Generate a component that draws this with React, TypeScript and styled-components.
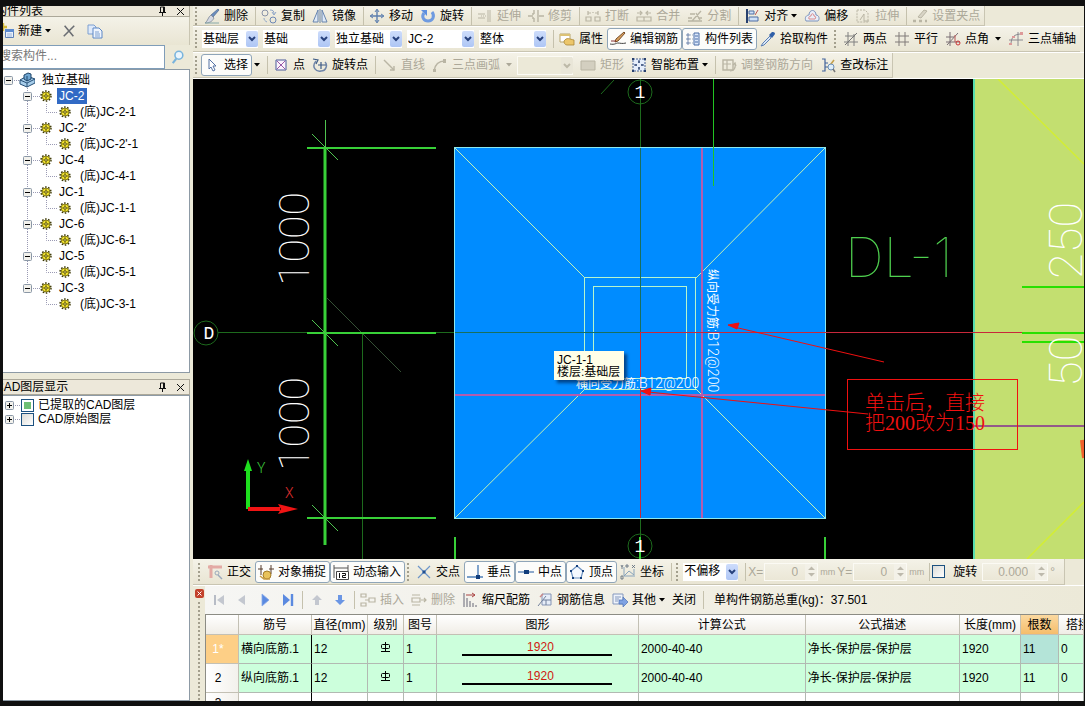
import React from 'react';
import styled, { createGlobalStyle, css } from 'styled-components';

const UI_FONT = '"Liberation Sans", "Noto Sans CJK SC", sans-serif';
const DRAFT_FONT = 'Roboto, "Noto Sans CJK SC", sans-serif';

const color = {
  face: '#ece9d8',
  faceLight: '#f4f2e8',
  line: '#c9c5b2',
  text: '#000000',
  off: '#aca899',
  select: '#316ac5',
  checkedBorder: '#8fa5b8',
  mint: '#ccffdc',
};

const GlobalStyle = createGlobalStyle`
  *, *::before, *::after { box-sizing: border-box; }
  body {
    margin: 0;
    background: #101010;
    font-family: ${UI_FONT};
    font-size: 12px;
    line-height: 16px;
    color: ${color.text};
  }
  button, input, select { font: inherit; color: inherit; margin: 0; }
`;

/* ---------- frame ---------- */

const Frame = styled.div`
  display: flex;
  height: 100vh;
  padding: 6px 1px 5px 3px;
  background: #101010;
  overflow: hidden;
`;

const Sidebar = styled.aside`
  display: grid;
  grid-template-rows: 367fr 322fr;
  row-gap: 6px;
  flex: none;
  width: 190px;
  padding-right: 3px;
  background: ${color.face};
`;

const Main = styled.main`
  display: flex;
  flex-direction: column;
  flex: 1;
  min-width: 0;
  background: ${color.face};
`;

/* ---------- side panels ---------- */

const Panel = styled.section`
  display: flex;
  flex-direction: column;
  min-height: 0;
  overflow: hidden;
`;

const PanelTitle = styled.header<{ $clipped?: boolean }>`
  display: flex;
  align-items: center;
  flex: none;
  height: ${p => (p.$clipped ? 11 : 16)}px;
  overflow: hidden;
  border: 1px solid #aca899;
  border-width: ${p => (p.$clipped ? '0 1px 1px 0' : '1px 1px 1px 0')};
  background: #ede8da;
`;

const PanelName = styled.h2`
  flex: 1;
  margin: 0 0 0 -8px;
  font-size: 12px;
  font-weight: 400;
  line-height: 14px;
  white-space: nowrap;
`;

const TitleButton = styled.button`
  display: flex;
  align-items: center;
  justify-content: center;
  width: 18px;
  height: 14px;
  padding: 0;
  border: 0;
  background: none;
`;

const PanelTools = styled.div`
  display: flex;
  align-items: center;
  gap: 4px;
  flex: none;
  height: 28px;
  margin-left: -8px;
  border-right: 1px solid ${color.line};
  background: linear-gradient(${color.faceLight}, #e9e5d3);
`;

const SearchRow = styled.form`
  display: flex;
  flex: none;
  height: 24px;
`;

const SearchInput = styled.input`
  flex: 1;
  min-width: 0;
  padding: 0 0 3px;
  text-indent: -4px;
  border: 1px solid #7f9db9;
  border-left: 0;
  background: #fff;
  &::placeholder { color: #777; opacity: 1; }
`;

const SearchButton = styled.button`
  display: flex;
  align-items: center;
  justify-content: center;
  width: 25px;
  padding: 0;
  border: 0;
  background: ${color.face};
`;

const TreeBox = styled.div`
  flex: 1;
  min-height: 0;
  padding-top: 2px;
  border: 1px solid #8d9aa5;
  border-left: 0;
  background: #fff;
  overflow: hidden;
`;

const TreeList = styled.ul`
  margin: 0;
  padding: 0;
  list-style: none;
`;

const TreeRow = styled.div<{ $indent: number }>`
  display: flex;
  align-items: center;
  height: 16px;
  padding-left: ${p => p.$indent}px;
  white-space: nowrap;
`;

const Expander = styled.button`
  display: flex;
  padding: 0;
  border: 0;
  background: none;
`;

const NodeLabel = styled.span<{ $selected?: boolean; $leaf?: boolean }>`
  height: 16px;
  margin-left: ${p => (p.$leaf ? 7 : 5)}px;
  padding: 0 2px;
  ${p => p.$selected && css`
    padding-right: 3px;
    background: ${color.select};
    color: #fff;
  `}
`;

const LayerRow = styled.li`
  display: flex;
  align-items: center;
  height: 14px;
  padding-left: 2px;
`;

const LayerLabel = styled.label`
  display: flex;
  align-items: center;
  gap: 4px;
  line-height: 14px;
  white-space: nowrap;
`;

const CheckBox = styled.input.attrs({ type: 'checkbox' })`
  appearance: none;
  flex: none;
  width: 13px;
  height: 13px;
  border: 1px solid #1c5180;
  background: linear-gradient(135deg, #dcdcd7, #fff);
  &:checked {
    background: #6fbf74;
    box-shadow: inset 0 0 0 2px #fff;
  }
`;

/* ---------- tool bars ---------- */

const Bar = styled.div<{ $h: number }>`
  display: flex;
  flex: none;
  height: ${p => p.$h}px;
  overflow: hidden;
  border-bottom: 1px solid #fff;
`;

const Strip = styled.div<{ $open?: boolean; $inset?: number }>`
  display: flex;
  align-items: center;
  flex: none;
  padding-left: ${p => p.$inset ?? 0}px;
  border-bottom: 1px solid ${color.line};
  border-right: ${p => (p.$open ? '0' : `1px solid ${color.line}`)};
  background: linear-gradient(${color.faceLight}, #e9e5d3);
`;

const Grip = styled.span`
  flex: none;
  width: 8px;
  height: 18px;
  background: radial-gradient(circle at 1px 1px, #a39f8d 1px, transparent 1px) 2px 0 / 8px 4px;
`;

const Separator = styled.span`
  flex: none;
  width: 6px;
  height: 18px;
  background: linear-gradient(#c5c1ad, #c5c1ad) 3px 0 / 1px 100% no-repeat;
`;

const Tool = styled.button<{ $on?: boolean }>`
  display: flex;
  align-items: center;
  gap: 4px;
  flex: none;
  height: 22px;
  padding: 0 3px 0 2px;
  border: 1px solid transparent;
  border-radius: 3px;
  background: none;
  white-space: nowrap;
  &:disabled { color: ${color.off}; }
  ${p => p.$on && css`
    border-color: ${color.checkedBorder};
    background: #fcfcfa;
  `}
`;

const IconTool = styled(Tool)`
  justify-content: center;
  width: 23px;
  padding: 0;
`;

const CaretBox = styled.span<{ $wide?: boolean }>`
  display: flex;
  margin-left: ${p => (p.$wide ? 2 : -1)}px;
`;

const SplitCaret = styled.button`
  display: flex;
  align-items: center;
  width: 12px;
  height: 22px;
  padding: 0 2px;
  border: 0;
  background: none;
`;

const ComboBox = styled.span<{ $w: number }>`
  display: grid;
  grid-template-columns: 1fr 12px;
  flex: none;
  width: ${p => p.$w}px;
  height: 18px;
  margin: 0 4px 0 1px;
`;

const ComboSelect = styled.select`
  appearance: none;
  grid-area: 1 / 1 / 2 / 3;
  padding: 0 12px 1px 1px;
  border: 0;
  border-radius: 0;
  background: #fff;
  &:disabled {
    border: 1px solid #fbfaf4;
    background: ${color.face};
    opacity: 1;
  }
`;

const ComboArrow = styled.span<{ $off?: boolean }>`
  display: flex;
  align-items: center;
  justify-content: center;
  grid-area: 1 / 2 / 2 / 3;
  margin: 1px 0;
  border-radius: 2px;
  background: ${p => (p.$off ? '#e9e6d8' : 'linear-gradient(#cddcfb, #aec6f5)')};
  pointer-events: none;
`;

const FieldLabel = styled.label`
  flex: none;
  padding-right: 1px;
  color: ${color.off};
`;

const NumberBox = styled.span<{ $w: number }>`
  display: flex;
  flex: none;
  width: ${p => p.$w}px;
  height: 18px;
  border: 1px solid #fbfaf4;
`;

const NumberInput = styled.input`
  flex: 1;
  min-width: 0;
  padding: 0 7px 0 0;
  border: 0;
  background: none;
  text-align: right;
  color: ${color.off};
`;

const Spinner = styled.span`
  display: flex;
  align-items: center;
  justify-content: center;
  width: 12px;
  background: #f3f1e8;
`;

const Unit = styled.span`
  flex: none;
  padding: 0 2px;
  font-size: 9px;
  color: ${color.off};
`;

const Degree = styled(Unit)`
  width: 16px;
  font-size: 12px;
`;

const TurnLabel = styled.label`
  display: flex;
  align-items: center;
  gap: 8px;
  flex: none;
  padding-right: 5px;
`;

/* ---------- drawing area ---------- */

const Canvas = styled.div`
  position: relative;
  flex: 1;
  min-height: 0;
  overflow: hidden;
  background: #000;
`;

const Drawing = styled.svg`
  display: block;
  width: 100%;
  height: 100%;
`;

const Tooltip = styled.div`
  position: absolute;
  left: 361px;
  top: 272px;
  padding: 3px 4px 2px 3px;
  background: #ffffe8;
  box-shadow: 3px 3px 3px rgba(0, 20, 60, 0.6);
  line-height: 12px;
  white-space: nowrap;
`;

/* ---------- rebar editor ---------- */

const Editor = styled.section`
  display: flex;
  flex: none;
  height: 115px;
`;

const EditorEdge = styled.div`
  display: flex;
  flex-direction: column;
  align-items: center;
  gap: 4px;
  flex: none;
  width: 12px;
  padding-top: 3px;
`;

const CloseDot = styled.button`
  display: flex;
  padding: 0;
  border: 0;
  background: none;
`;

const EdgeGrip = styled.span`
  flex: 1;
  width: 3px;
  background: radial-gradient(circle at 1px 1px, #a39f8d 1px, transparent 1px) 0 0 / 3px 4px;
`;

const EditorBody = styled.div`
  display: flex;
  flex-direction: column;
  flex: 1;
  min-width: 0;
`;

const EditorBar = styled.div`
  display: flex;
  align-items: center;
  flex: none;
  height: 28px;
  padding-left: 2px;
  background: linear-gradient(90deg, #f6f6f4, #f1efe5 50%, #ece9d8);
`;

const Total = styled.span`
  padding-left: 8px;
  white-space: nowrap;
`;

const Sheet = styled.div`
  flex: 1;
  min-height: 0;
  overflow: hidden;
  border: 1px solid #8c8c84;
  border-width: 1px 0 0 1px;
  background: #fff;
`;

const Grid = styled.table`
  width: 100%;
  table-layout: fixed;
  border-collapse: separate;
  border-spacing: 0;
`;

const HeadCell = styled.th<{ $active?: boolean; $cut?: boolean }>`
  height: 20px;
  padding: ${p => (p.$cut ? '0 0 0 7px' : '0')};
  border: 1px solid #c3c0b4;
  border-width: 0 1px 1px 0;
  background: ${p => (p.$active ? 'linear-gradient(#fbd9a0, #f5bd6b)' : 'linear-gradient(#fff, #f0ede6)')};
  font-weight: 400;
  text-align: ${p => (p.$cut ? 'left' : 'center')};
  white-space: nowrap;
  overflow: hidden;
`;

const RowHead = styled.th<{ $active?: boolean; $short?: boolean }>`
  height: ${p => (p.$short ? 20 : 29)}px;
  padding: 0 8px 0 0;
  border: 1px solid #c3c0b4;
  border-width: 0 1px 1px 0;
  background: ${p => (p.$active ? '#fdcf86' : 'linear-gradient(90deg, #fff, #f3f1ec)')};
  color: ${p => (p.$active ? '#fff' : '#000')};
  font-weight: 400;
`;

const Cell = styled.td<{ $blank?: boolean; $mid?: boolean; $focus?: boolean; $bar?: boolean }>`
  height: ${p => (p.$blank ? 20 : 29)}px;
  padding: ${p => (p.$mid ? '0' : '0 0 0 2px')};
  border: 1px solid #b2b9b2;
  border-width: 0 1px 1px 0;
  border-right-color: ${p => (p.$bar ? '#000' : '#b2b9b2')};
  background: ${p => (p.$blank ? '#fff' : p.$focus ? '#b4e4d8' : color.mint)};
  text-align: ${p => (p.$mid ? 'center' : 'left')};
  white-space: nowrap;
  overflow: hidden;
`;

const ShapeLine = styled.span`
  display: inline-block;
  width: 150px;
  margin-bottom: 4px;
  border-bottom: 2px solid #000;
  padding-left: 6px;
  color: #d02010;
  line-height: 14px;
`;

/* ---------- icons ---------- */

const G = '#b9b5a4';

const glyphs: Record<string, React.ReactNode> = {
  brush: <><path d="M14 1l1 1-6 7-2-2z" fill="#6c8fc0" stroke="#49658c" strokeWidth=".7" /><path d="M7 7l3 3c-2 4-5 5-9 5 3-2 3-6 6-8z" fill="#d5d9e2" stroke="#7c8798" strokeWidth=".8" /><path d="M1 15h14" stroke="#8aa" /></>,
  copy: <><circle cx="4" cy="5" r="3" stroke="#8a93a8" /><circle cx="12" cy="12" r="3" stroke="#6d88b5" /><path d="M9 2c3 0 4 1 4 4m-2-2l2 3 2-3M3 10c0 2 1 3 3 4" stroke="#8fa6c8" /></>,
  mirror: <><path d="M6 2v12H1zM10 2v12h5z" fill="#dfeaf8" stroke="#6784ad" /><path d="M8 1v14" stroke="#6784ad" /></>,
  move: <><path d="M8 2v12M2 8h12" stroke="#5d7fae" strokeWidth="1.4" /><path d="M6 4l2-3 2 3M6 12l2 3 2-3M4 6L1 8l3 2M12 6l3 2-3 2" stroke="#5d7fae" /></>,
  rotate: <><path d="M4 5c-3 4 0 8 4 8 5 0 7-5 4-9" stroke="#6f9be0" strokeWidth="3" /><path d="M1 2h6v6z" fill="#5c8fdf" /></>,
  extend: <><path d="M1 6h7M1 10h7M11 2v12M13 2v12" stroke={G} /><path d="M4 8h5" stroke={G} strokeDasharray="1 1" /></>,
  trim: <><path d="M0 8h5M11 8h5M6 2v4M6 10v4M10 2v12M4 6h2M4 10h2" stroke={G} strokeWidth="1.4" /></>,
  breakIt: <><path d="M1 9h5v4H1zM10 9h5v4h-5zM3 3v4M3 5h3M13 3v4M13 5h-3M8 4v1" stroke={G} strokeWidth="1.2" /></>,
  merge: <><path d="M1 9h14v4H1zM4 3l2 2-2 2M12 3l-2 2 2 2M1 5h4M15 5h-4M8 9v4" stroke={G} strokeWidth="1.2" /></>,
  split: <><path d="M1 10h4M11 10h4M1 13h14M3 6h5M5 13L14 3M9 5l4 7" stroke={G} strokeWidth="1.3" /></>,
  align: <><path d="M3 1v14" stroke="#27406e" strokeWidth="2" /><path d="M5 3h5v3H5zM5 9h9v4H5z" fill="#cfe0f7" stroke="#4c6da3" /><path d="M14 2l-3 5" stroke="#b55" /></>,
  offset: <><path d="M2 13c-2-4 1-6 3-6 0-6 7-6 7 0 3 0 4 4 2 6z" fill="#e9eef8" stroke="#7c94bd" /><path d="M5 11c-1-2 1-3 2-3 0-3 3-3 3 0 2 0 2 2 1 3z" stroke="#d98a8a" /></>,
  stretch: <><path d="M2 2h8l3 3v9H2z" stroke={G} strokeDasharray="2 1" /><path d="M5 12l4-6v7h5" stroke={G} /></>,
  grips: <><path d="M1 13h3M7 13h3M13 13h2" stroke={G} strokeWidth="2.4" /><path d="M6 9l6-7 3 1-6 7z" fill="#d8d4c6" stroke={G} /></>,
  props: <><path d="M1 3h10v8H1z" fill="#fff" stroke="#b7a56c" /><path d="M1 3h10v2H1z" fill="#dcc274" /><path d="M5 10c3-4 5-2 10-1v5H8c-2 0-3-2-3-4z" fill="#ecc66a" stroke="#a98636" strokeWidth=".8" /></>,
  pen: <><path d="M15 2L8 10l-3 1 1-3 8-7z" fill="#d9a15e" stroke="#6a3f1c" strokeWidth=".9" /><path d="M0 13c5 1 6-1 8-1s4 1 8 0" stroke="#444" /><path d="M1 10h5" stroke="#833" /></>,
  list: <><path d="M9 2h5v12H9z" fill="#dce8fa" stroke="#486da6" /><path d="M10 5h3M10 8h3M10 11h3" stroke="#486da6" /><path d="M2 3h2v2H2zM2 7h2v2H2zM2 11h2v2H2z" stroke="#5470a0" strokeWidth=".8" /><path d="M5 4h3M5 8h3M5 12h3" stroke="#9ab" strokeDasharray="1 1" /></>,
  dropper: <><path d="M10 5L3 12l-2 3 3-1 7-7z" fill="#dbe7f7" stroke="#5a7fb4" /><path d="M9 4l3 3 3-4c0-2-2-2-3-2z" fill="#2f5fa8" /></>,
  axis2: <><path d="M1 11h14M5 1v14M11 3v12M2 5h10" stroke="#808080" /><path d="M2 14L14 2" stroke="#777" /></>,
  axisPar: <><path d="M1 5h14M1 11h14M5 1v14M11 1v14" stroke="#807a78" /></>,
  axisAng: <><path d="M1 11h14M5 1v14M2 14L13 2M1 6h8" stroke="#7b6f74" /><circle cx="13" cy="12" r="2" stroke="#c33" /><path d="M10 4v7" stroke="#b55" /></>,
  axis3: <><path d="M3 14C3 6 6 3 14 3M10 1v14M1 9h14" stroke="#8a8a90" /><path d="M1 12h3v2H1zM4 5h3v2H4zM12 1h3v3h-3z" fill="#d99" /></>,
  pointer: <path d="M5 2v10l2-2 2 4 2-1-2-4h3z" fill="#fff" stroke="#5472a4" />,
  point: <><path d="M3 3h10v10H3z" fill="#fbf3fb" stroke="#4b5a9a" /><path d="M4 4l8 8M12 4l-8 8" stroke="#9a5aa8" /></>,
  turnPt: <><path d="M4 4c-5 6 0 11 5 10 5 0 7-6 4-9" stroke="#6f85a8" strokeWidth="1.5" /><path d="M1 2l5 1-2 4M9 5v7M6 8h8" stroke="#3d5b86" strokeWidth="1.2" /></>,
  line: <><path d="M3 3l10 10" stroke={G} strokeWidth="1.4" /><path d="M13 9v4H9" stroke={G} strokeWidth="1.4" /></>,
  arc: <><path d="M2 14C3 7 7 4 13 4" stroke={G} strokeWidth="1.5" /><path d="M11 2h3v4h-3zM1 12h3v3H1z" fill={G} /></>,
  rect: <path d="M1 4h14v9H1z" fill="#d3cfc0" stroke={G} />,
  smart: <><path d="M2 2h12v12H2z" fill="#e6eefb" stroke="#445e90" strokeDasharray="2 1" /><path d="M8 3v3M8 10v3M3 8h3M10 8h3M7 5h2M7 11h2M5 7v2M11 7v2" stroke="#223a6a" /><path d="M1 1h2v2H1zM13 1h2v2h-2zM1 13h2v2H1zM13 13h2v2h-2z" fill="#28406e" /></>,
  turnBar: <><path d="M2 3h10v10H2z" stroke={G} strokeWidth="1.4" /><path d="M6 3v10M2 7h8M9 14c4 0 6-3 5-8l-2 2m2-2l1 3" stroke={G} strokeWidth="1.2" /></>,
  note: <><path d="M2 2h3v4h3M2 14h3v-4h3M5 2v12" stroke="#41639b" strokeWidth="1.2" /><path d="M8 11l6-8" stroke="#c4a04a" strokeWidth="1.6" /><circle cx="11" cy="10" r="3" fill="#dfeefa" stroke="#6b8fb8" /><path d="M13 12l2 3" stroke="#777" strokeWidth="1.5" /></>,
  ortho: <><path d="M1 3h14M4 1v13" stroke="#e3aaa4" strokeWidth="3" /><circle cx="10" cy="9" r="2" stroke="#9aa8ba" /><path d="M11 11l4 4" stroke="#9aa8ba" strokeWidth="1.5" /></>,
  snap: <><path d="M3 1v10M13 1v9M0 5h5M11 5h5" stroke="#553a2a" /><circle cx="9" cy="11" r="4" fill="#e8c25a" stroke="#a37b28" /><path d="M2 12l4 3h6" stroke="#c99c40" strokeWidth="1.5" /></>,
  dyn: <><path d="M1 1v13M15 1v6M1 4h14" stroke="#555" /><path d="M3.500 7.500h12v8h-12z" fill="#fff" stroke="#444" /><path d="M6.500 9v5M9 9.500h3.500v2H9.500v2H13" stroke="#111" /></>,
  cross: <><path d="M2 2l12 12M14 2L2 14" stroke="#6c95c9" strokeWidth="1.2" /><path d="M6.500 6.500h3v3h-3z" fill="#1f4f93" /></>,
  perp: <><path d="M11 1v12M0 13h16" stroke="#4d7fb8" strokeWidth="1.4" /><path d="M9 11h4v4H9z" fill="#123e7c" /></>,
  mid: <><path d="M0 8h16" stroke="#5d86b8" strokeWidth="1.4" /><path d="M6 6h5v4H6z" fill="#123e7c" /></>,
  vertex: <><path d="M8 2l6 5-2 7H4L2 7z" fill="#f4f9ff" stroke="#6d93c2" strokeWidth="1.2" /><path d="M7 1h2v2H7zM13 6h2v2h-2zM11 13h2v2h-2zM3 13h2v2H3zM1 6h2v2H1z" fill="#123e7c" /></>,
  coord: <><path d="M4 3v9h11M4 12l5-5 5 4V5" stroke="#87a3bb" /><path d="M1 1l1 2 1-2M2 3v2M12 1l3 3M15 1l-3 3M1 12h2v3H1zM6 1h2v2H6z" stroke="#567" strokeWidth=".8" /></>,
  first: <><path d="M4 3v10" stroke="#b7bcc6" strokeWidth="2" /><path d="M13 3v10L6 8z" fill="#c3c7cf" /></>,
  prev: <path d="M11 3v10L4 8z" fill="#c3c7cf" />,
  next: <path d="M5 2v12l7-6z" fill="#5b8ae0" stroke="#87a9ea" strokeWidth=".8" />,
  last: <><path d="M3 2v12l7-6z" fill="#5b8ae0" /><path d="M12 2v12" stroke="#5b8ae0" strokeWidth="2.4" /></>,
  up: <path d="M8 3l5 5h-3v5H6V8H3z" fill="#c3c7cf" />,
  down: <path d="M8 13L3 8h3V3h4v5h3z" fill="#6b96e4" />,
  insertRow: <><path d="M1 2h5v3H1zM1 11h5v3H1zM9 6h6v4H9zM5 8h4" stroke={G} strokeWidth="1.2" /></>,
  deleteRow: <><path d="M1 3h8M1 6h8v4H1zM1 13h8M10 8h5M13 6l2 2-2 2" stroke={G} strokeWidth="1.2" /></>,
  scale: <><path d="M2 1v14M5 6v9M8 9v6M11 11v4M14 13v2" stroke="#667" /><path d="M4 3h9M10 1l3 2-3 2" stroke="#a44" /></>,
  info: <><path d="M5 2h9v11H5z" fill="#e6edf8" stroke="#8494b5" /><path d="M1 14l8-10M6 8h8M9 8v5" stroke="#71809c" /><path d="M3 5l3-3" stroke="#c88" strokeWidth="1.5" /></>,
  other: <><path d="M1 2h10v10H1z" fill="#eef3fb" stroke="#8498bd" /><path d="M3 5h6M3 7h4M3 9h3" stroke="#8498bd" /><path d="M7 8h4V5l5 5-5 5v-3H7z" fill="#7fa2e2" stroke="#4c70b5" strokeWidth=".7" /></>,
  fresh: <><path d="M7.500 6.500h8v8h-8z" fill="#e8f0fc" stroke="#5b80b8" /><path d="M7 6h9v3H7z" fill="#5b8ad0" /><path d="M9 11h5M9 13h5" stroke="#9db6da" /><path d="M5 0v8M1 4h8" stroke="#d2b93c" strokeWidth="2.4" /></>,
  remove: <path d="M3 2l10 12M14 2L2 14" stroke="#6b6e73" strokeWidth="1.8" />,
  duplicate: <><path d="M1 2h6l2 2v7H1z" fill="#dfeafa" stroke="#7d9fd0" /><path d="M6 5h6l3 3v7H6z" fill="#eef4fd" stroke="#5d87c5" /><path d="M8 9h4M8 11h5M8 13h5" stroke="#7d9fd0" /></>,
  find: <><circle cx="9" cy="6" r="4.500" fill="#eaf5fd" stroke="#79b4dd" strokeWidth="1.8" /><path d="M6 10l-4 5" stroke="#79b4dd" strokeWidth="2.400" /></>,
  footing: <><path d="M1 8l7-4 8 3v4l-8 4-7-3z" fill="#a7cdea" stroke="#254e75" /><path d="M1 8l7 3 8-4M8 11v4" stroke="#254e75" /><path d="M5 3l4-2 3 1v5L8 9 5 7z" fill="#6fa6d2" stroke="#1e4468" /><path d="M8 4v5" stroke="#1e4468" /></>,
};

const Icon = ({ name, size = 16 }: { name: string; size?: number }) => (
  <svg width={size} height={size} viewBox="0 0 16 16" fill="none" aria-hidden="true">{glyphs[name]}</svg>
);

const Gear = () => (
  <svg width="12" height="12" viewBox="0 0 12 12" fill="none" aria-hidden="true">
    <circle cx="6" cy="6" r="5" stroke="#3a3600" strokeWidth="1.400" strokeDasharray="1.600 1.540" />
    <circle cx="6" cy="6" r="4" fill="#f0e22e" stroke="#5a5200" strokeWidth=".7" />
    <path d="M6 2.500v2M6 7.500v2M2.500 6h2M7.500 6h2" stroke="#5a5200" strokeWidth=".8" />
    <circle cx="6" cy="6" r="1.300" fill="#fff27a" stroke="#3a3600" strokeWidth=".8" />
  </svg>
);

const Caret = ({ off }: { off?: boolean }) => (
  <svg width="6" height="4" viewBox="0 0 6 4" aria-hidden="true"><path d="M0 0h6L3 3.500z" fill={off ? color.off : '#000'} /></svg>
);

const Pin = () => (
  <svg width="9" height="10" viewBox="0 0 9 10" fill="none" aria-hidden="true"><path d="M2.500 1h4v5M2.500 1v5M5.500 1v5M1 6.500h7M4.500 6.500V10" stroke="#111" /></svg>
);

const Cross = () => (
  <svg width="9" height="9" viewBox="0 0 9 9" fill="none" aria-hidden="true"><path d="M1 1l7 7M8 1L1 8" stroke="#111" /></svg>
);

/* plus / minus box with the dotted lines that join it to its neighbours */
const Branch = ({ w, above, below, plus }: { w: number; above?: boolean; below?: boolean; plus?: boolean }) => (
  <svg width={w} height="16" viewBox={`0 0 ${w} 16`} fill="none" aria-hidden="true">
    {above && <path d="M4.500 0v4" stroke="#9a9ab4" strokeDasharray="1 1" />}
    {below && <path d="M4.500 13v3" stroke="#9a9ab4" strokeDasharray="1 1" />}
    {w > 10 && <path d={`M10 8.500h${w - 10}`} stroke="#9a9ab4" strokeDasharray="1 1" />}
    <rect x=".5" y="4.500" width="8" height="8" rx="1" fill="#f2f1ec" stroke="#8a97a6" />
    <path d={plus ? 'M2 8.500h5M4.500 6v5' : 'M2 8.500h5'} stroke="#000" />
  </svg>
);

const LeafLines = ({ more }: { more: boolean }) => (
  <svg width="36" height="16" viewBox="0 0 36 16" fill="none" aria-hidden="true">
    {more && <path d="M4.500 0v16" stroke="#9a9ab4" strokeDasharray="1 1" />}
    <path d="M23.500 0v8.500h11" stroke="#9a9ab4" strokeDasharray="1 1" />
  </svg>
);

/* ---------- composed controls ---------- */

type ToolProps = { icon: string; label: string; off?: boolean; on?: boolean; caret?: 'near' | 'far' };

const ToolItem = ({ icon, label, off, on, caret }: ToolProps) => (
  <Tool type="button" disabled={off} $on={on} aria-pressed={on}>
    <Icon name={icon} />
    {label}
    {caret && <CaretBox $wide={caret === 'far'}><Caret off={off} /></CaretBox>}
  </Tool>
);

const Combo = ({ value, name, w, off }: { value: string; name: string; w: number; off?: boolean }) => (
  <ComboBox $w={w}>
    <ComboSelect aria-label={name} disabled={off} defaultValue={value}><option>{value}</option></ComboSelect>
    <ComboArrow $off={off}>
      <svg width="8" height="6" viewBox="0 0 8 6" fill="none" aria-hidden="true">
        <path d="M1 1l3 3 3-3" stroke={off ? '#bdb9a8' : '#27417c'} strokeWidth="2" />
      </svg>
    </ComboArrow>
  </ComboBox>
);

const Stepper = ({ id, value, w, name }: { id: string; value: string; w: number; name?: string }) => (
  <NumberBox $w={w}>
    <NumberInput id={id} aria-label={name} defaultValue={value} disabled />
    <Spinner>
      <svg width="7" height="11" viewBox="0 0 7 11" aria-hidden="true"><path d="M0 4l3.500-3.500L7 4zM0 7l3.500 3.500L7 7z" fill="#bdb9ac" /></svg>
    </Spinner>
  </NumberBox>
);

/* ---------- data ---------- */

const components = ['JC-2', "JC-2'", 'JC-4', 'JC-1', 'JC-6', 'JC-5', 'JC-3'];

const rebars = [
  { no: '1*', name: '横向底筋.1' },
  { no: '2', name: '纵向底筋.1' },
];

const RebarGrade = () => (
  <svg width="11" height="11" viewBox="0 0 11 11" fill="none" role="img" aria-label="HRB335">
    <path d="M5.500 0v10M1 9.500h9" stroke="#000" />
    <rect x="1.500" y="2.500" width="8" height="4" rx="1" stroke="#000" />
  </svg>
);

/* ---------- plan drawing ---------- */

const Plan = () => (
  <Drawing viewBox="193 79 891 480" preserveAspectRatio="xMinYMin slice" fill="none" fontFamily={DRAFT_FONT}>
    <rect x="974" y="79" width="400" height="480" fill="#c3df70" />
    <path d="M974 79v480" stroke="#58dcae" strokeWidth="2" />
    <path d="M998 79l86 85M1084 502l-57 57" stroke="#d3ee33" strokeWidth="1.500" />

    <g stroke="#1d6a1d">
      <path d="M218 332.500h237M362.500 334v225M601 94l13-14" />
      <circle cx="206" cy="333" r="12" />
      <circle cx="640" cy="92" r="12" />
      <circle cx="640" cy="546" r="12" />
      <path d="M640.500 79v69M640.500 518v41" />
    </g>
    <path d="M327 298l74 74" stroke="#355035" />

    <rect x="454.500" y="147.500" width="371" height="371" fill="#008cff" stroke="#8ce8f0" />
    <path d="M455 148l130 130M825 148L696 278M455 518l130-129M825 518L696 389" stroke="#c4f2b4" />
    <rect x="584.500" y="277.500" width="111" height="112" stroke="#b6f5cc" />
    <rect x="593.500" y="286.500" width="93" height="92" stroke="#b6f5cc" />
    <path d="M455 332.500h185M640.500 148v185" stroke="#1a6f5c" />
    <path d="M702 148v370M455 395h370" stroke="#b45cae" strokeWidth="2" />
    <path d="M640.500 333v185M640 332.500h382" stroke="#c8283a" />
    <path d="M713.500 79v107" stroke="#22c422" />

    <g stroke="#38d038" strokeWidth="2">
      <path d="M325 148v397" strokeWidth="3" />
      <path d="M307 148h129M307 333h129M307 518h129" />
      <path d="M455 537v22M640 537v22M825 537v22" />
      <path d="M1022 287h62M1022 333h62M1022 342h62" stroke="#28e000" />
    </g>
    <path d="M325.500 120v28M312 134l26 26M312 320l26 26M312 505l26 26" stroke="#4fc44f" />
    <path d="M974 426h110" stroke="#93598a" strokeWidth="2" />
    <path d="M1082 440l2 18" stroke="#f0602c" strokeWidth="4" />

    <g fill="#fff" fontSize="43" fontWeight="100">
      <text transform="translate(309 286) rotate(-90)">1000</text>
      <text transform="translate(309 471) rotate(-90)">1000</text>
    </g>
    <g fill="#fff" fontSize="47" fontWeight="100">
      <text transform="translate(1082 279) rotate(-90)">250</text>
      <text transform="translate(1082 387) rotate(-90)">50</text>
    </g>
    <text x="845" y="277" fontSize="54" fontWeight="100" fontFamily="Inter, sans-serif" fill="#4fd04f">DL-1</text>
    <g fill="#fff" fontSize="18" textAnchor="middle" fontFamily='"Liberation Mono", monospace'>
      <text x="209" y="339">D</text>
      <text x="640" y="98">1</text>
      <text x="640" y="552">1</text>
    </g>

    <g fill="#fff" fontSize="12">
      <text x="576" y="388">横向受力筋<tspan fontSize="14" fontWeight="300">:B12@200</tspan></text>
      <text transform="translate(708 269) rotate(90)">纵向受力筋<tspan fontSize="14" fontWeight="300">:B12@200</tspan></text>
    </g>

    <path d="M248 509v-40" stroke="#1ee01e" strokeWidth="4" />
    <path d="M248 459l4 12h-8z" fill="#1ee01e" />
    <path d="M248 509h32" stroke="#f01414" strokeWidth="4" />
    <path d="M298 509l-20-5 3 5-3 5z" fill="#f01414" />
    <text x="257" y="473" fontSize="14" fontWeight="300" fill="#3cc83c">Y</text>
    <text x="285" y="498" fontSize="14" fontWeight="300" fill="#e03030">X</text>

    <g stroke="#f01010">
      <rect x="847.500" y="379.500" width="170" height="70" />
      <path d="M884 362l-150-35M868 414l-220-22" />
      <path d="M728 325l11-2-2 6zM641 391l10-3-1 7z" fill="#f01010" />
    </g>
    <g fill="#f01010" fontSize="20" fontWeight="300" fontFamily='"Liberation Serif", "Noto Sans CJK SC", serif'>
      <text x="865" y="410">单击后，直接</text>
      <text x="865" y="430">把200改为150</text>
    </g>
  </Drawing>
);

/* ---------- page ---------- */

const ComponentPanel = () => (
  <Panel aria-label="构件列表">
    <PanelTitle $clipped>
      <PanelName>构件列表</PanelName>
      <TitleButton type="button" aria-label="固定"><Pin /></TitleButton>
      <TitleButton type="button" aria-label="关闭"><Cross /></TitleButton>
    </PanelTitle>
    <PanelTools>
      <Tool type="button">
        <Icon name="fresh" />新建<CaretBox><Caret /></CaretBox>
      </Tool>
      <Tool type="button" aria-label="删除"><Icon name="remove" size={14} /></Tool>
      <Tool type="button" aria-label="复制"><Icon name="duplicate" /></Tool>
    </PanelTools>
    <SearchRow onSubmit={e => e.preventDefault()}>
      <SearchInput aria-label="搜索构件" placeholder="搜索构件..." />
      <SearchButton type="submit" aria-label="搜索"><Icon name="find" size={14} /></SearchButton>
    </SearchRow>
    <TreeBox>
      <TreeList>
        <li>
          <TreeRow $indent={1}>
            <Expander type="button" aria-label="折叠"><Branch w={15} /></Expander>
            <Icon name="footing" />
            <NodeLabel>独立基础</NodeLabel>
          </TreeRow>
          <TreeList>
            {components.map((name, i) => {
              const more = i < components.length - 1;
              return (
                <li key={name}>
                  <TreeRow $indent={20}>
                    <Expander type="button" aria-label="折叠"><Branch w={17} above below={more} /></Expander>
                    <Gear />
                    <NodeLabel $selected={i === 0}>{name}</NodeLabel>
                  </TreeRow>
                  <TreeRow $indent={20}>
                    <LeafLines more={more} />
                    <Gear />
                    <NodeLabel $leaf>{`(底)${name}-1`}</NodeLabel>
                  </TreeRow>
                </li>
              );
            })}
          </TreeList>
        </li>
      </TreeList>
    </TreeBox>
  </Panel>
);

const LayerPanel = () => (
  <Panel aria-label="CAD图层显示">
    <PanelTitle>
      <PanelName>CAD图层显示</PanelName>
      <TitleButton type="button" aria-label="固定"><Pin /></TitleButton>
      <TitleButton type="button" aria-label="关闭"><Cross /></TitleButton>
    </PanelTitle>
    <TreeBox>
      <TreeList>
        <LayerRow>
          <Expander type="button" aria-label="展开"><Branch w={16} plus /></Expander>
          <LayerLabel><CheckBox defaultChecked />已提取的CAD图层</LayerLabel>
        </LayerRow>
        <LayerRow>
          <Expander type="button" aria-label="展开"><Branch w={16} plus /></Expander>
          <LayerLabel><CheckBox />CAD原始图层</LayerLabel>
        </LayerRow>
      </TreeList>
    </TreeBox>
  </Panel>
);

const SnapBar = () => (
  <Bar $h={27}>
    <Strip $inset={3}>
      <Grip />
      <ToolItem icon="ortho" label="正交" />
      <ToolItem icon="snap" label="对象捕捉" on />
      <ToolItem icon="dyn" label="动态输入" on />
      <Grip />
      <ToolItem icon="cross" label="交点" />
      <ToolItem icon="perp" label="垂点" on />
      <ToolItem icon="mid" label="中点" on />
      <ToolItem icon="vertex" label="顶点" on />
      <ToolItem icon="coord" label="坐标" />
      <Separator />
      <Grip />
      <Combo name="偏移方式" value="不偏移" w={55} />
      <Separator />
      <FieldLabel htmlFor="dx">X=</FieldLabel>
      <Stepper id="dx" value="0" w={54} />
      <Unit>mm</Unit>
      <FieldLabel htmlFor="dy">Y=</FieldLabel>
      <Stepper id="dy" value="0" w={54} />
      <Unit>mm</Unit>
      <Separator />
      <TurnLabel><CheckBox />旋转</TurnLabel>
      <Stepper id="turn" name="旋转角度" value="0.000" w={66} />
      <Degree>°</Degree>
    </Strip>
  </Bar>
);

const RebarEditor = () => (
  <Editor>
    <EditorEdge>
      <CloseDot type="button" aria-label="关闭">
        <svg width="9" height="9" viewBox="0 0 9 9" fill="none" aria-hidden="true">
          <rect width="9" height="9" rx="2" fill="#c2412c" /><path d="M2.500 2.500l4 4M6.500 2.500l-4 4" stroke="#fff" />
        </svg>
      </CloseDot>
      <EdgeGrip />
    </EditorEdge>
    <EditorBody>
      <EditorBar>
        <IconTool type="button" aria-label="首行" disabled><Icon name="first" /></IconTool>
        <IconTool type="button" aria-label="上一行" disabled><Icon name="prev" /></IconTool>
        <IconTool type="button" aria-label="下一行"><Icon name="next" /></IconTool>
        <IconTool type="button" aria-label="末行"><Icon name="last" /></IconTool>
        <Separator />
        <IconTool type="button" aria-label="上移" disabled><Icon name="up" /></IconTool>
        <IconTool type="button" aria-label="下移"><Icon name="down" /></IconTool>
        <Separator />
        <ToolItem icon="insertRow" label="插入" off />
        <ToolItem icon="deleteRow" label="删除" off />
        <ToolItem icon="scale" label="缩尺配筋" />
        <ToolItem icon="info" label="钢筋信息" />
        <ToolItem icon="other" label="其他" caret="near" />
        <Tool type="button">关闭</Tool>
        <Separator />
        <Total>单构件钢筋总重(kg)：37.501</Total>
      </EditorBar>
      <Sheet>
        <Grid>
          <colgroup>
            <col style={{ width: 33 }} /><col style={{ width: 73 }} /><col style={{ width: 56 }} />
            <col style={{ width: 36 }} /><col style={{ width: 33 }} /><col style={{ width: '23%' }} />
            <col style={{ width: '19%' }} /><col /><col style={{ width: 61 }} />
            <col style={{ width: 38 }} /><col style={{ width: 25 }} />
          </colgroup>
          <thead>
            <tr>
              <HeadCell aria-label="序号" />
              <HeadCell>筋号</HeadCell>
              <HeadCell>直径(mm)</HeadCell>
              <HeadCell>级别</HeadCell>
              <HeadCell>图号</HeadCell>
              <HeadCell>图形</HeadCell>
              <HeadCell>计算公式</HeadCell>
              <HeadCell>公式描述</HeadCell>
              <HeadCell>长度(mm)</HeadCell>
              <HeadCell $active>根数</HeadCell>
              <HeadCell $cut>搭接</HeadCell>
            </tr>
          </thead>
          <tbody>
            {rebars.map((r, i) => (
              <tr key={r.no}>
                <RowHead $active={i === 0}>{r.no}</RowHead>
                <Cell $bar>{r.name}</Cell>
                <Cell>12</Cell>
                <Cell $mid><RebarGrade /></Cell>
                <Cell>1</Cell>
                <Cell $mid><ShapeLine>1920</ShapeLine></Cell>
                <Cell>2000-40-40</Cell>
                <Cell>净长-保护层-保护层</Cell>
                <Cell>1920</Cell>
                <Cell $focus={i === 0}>11</Cell>
                <Cell>0</Cell>
              </tr>
            ))}
            <tr>
              <RowHead $short>3</RowHead>
              <Cell $blank $bar />
              {Array.from({ length: 9 }, (_, i) => <Cell key={i} $blank />)}
            </tr>
          </tbody>
        </Grid>
      </Sheet>
    </EditorBody>
  </Editor>
);

const App = () => (
  <>
    <GlobalStyle />
    <Frame>
      <Sidebar>
        <ComponentPanel />
        <LayerPanel />
      </Sidebar>
      <Main>
        <Bar $h={21}>
          <Strip>
            <Grip />
            <ToolItem icon="brush" label="删除" />
            <Separator />
            <ToolItem icon="copy" label="复制" />
            <ToolItem icon="mirror" label="镜像" />
            <Separator />
            <ToolItem icon="move" label="移动" />
            <ToolItem icon="rotate" label="旋转" />
            <Separator />
            <ToolItem icon="extend" label="延伸" off />
            <ToolItem icon="trim" label="修剪" off />
            <Separator />
            <ToolItem icon="breakIt" label="打断" off />
            <ToolItem icon="merge" label="合并" off />
            <ToolItem icon="split" label="分割" off />
            <Separator />
            <ToolItem icon="align" label="对齐" caret="near" />
            <ToolItem icon="offset" label="偏移" />
            <ToolItem icon="stretch" label="拉伸" off />
            <Separator />
            <ToolItem icon="grips" label="设置夹点" off />
          </Strip>
        </Bar>
        <Bar $h={26}>
          <Strip $open>
            <Grip />
            <Combo name="楼层" value="基础层" w={56} />
            <Combo name="构件类别" value="基础" w={67} />
            <Combo name="构件类型" value="独立基础" w={67} />
            <Combo name="构件名称" value="JC-2" w={67} />
            <Combo name="单元" value="整体" w={67} />
            <Separator />
            <ToolItem icon="props" label="属性" />
            <ToolItem icon="pen" label="编辑钢筋" on />
            <ToolItem icon="list" label="构件列表" on />
            <ToolItem icon="dropper" label="拾取构件" />
            <Grip />
            <ToolItem icon="axis2" label="两点" />
            <ToolItem icon="axisPar" label="平行" />
            <ToolItem icon="axisAng" label="点角" caret="far" />
            <ToolItem icon="axis3" label="三点辅轴" />
          </Strip>
        </Bar>
        <Bar $h={26}>
          <Strip>
            <Grip />
            <ToolItem icon="pointer" label="选择" on />
            <SplitCaret type="button" aria-label="选择方式"><Caret /></SplitCaret>
            <Separator />
            <ToolItem icon="point" label="点" />
            <ToolItem icon="turnPt" label="旋转点" />
            <Separator />
            <ToolItem icon="line" label="直线" off />
            <ToolItem icon="arc" label="三点画弧" off caret="far" />
            <Combo name="画弧参数" value="" w={56} off />
            <ToolItem icon="rect" label="矩形" off />
            <ToolItem icon="smart" label="智能布置" caret="near" />
            <Separator />
            <ToolItem icon="turnBar" label="调整钢筋方向" off />
            <ToolItem icon="note" label="查改标注" />
          </Strip>
        </Bar>
        <Canvas>
          <Plan />
          <Tooltip role="tooltip">JC-1-1<br />楼层:基础层</Tooltip>
        </Canvas>
        <SnapBar />
        <RebarEditor />
      </Main>
    </Frame>
  </>
);

export default App;
